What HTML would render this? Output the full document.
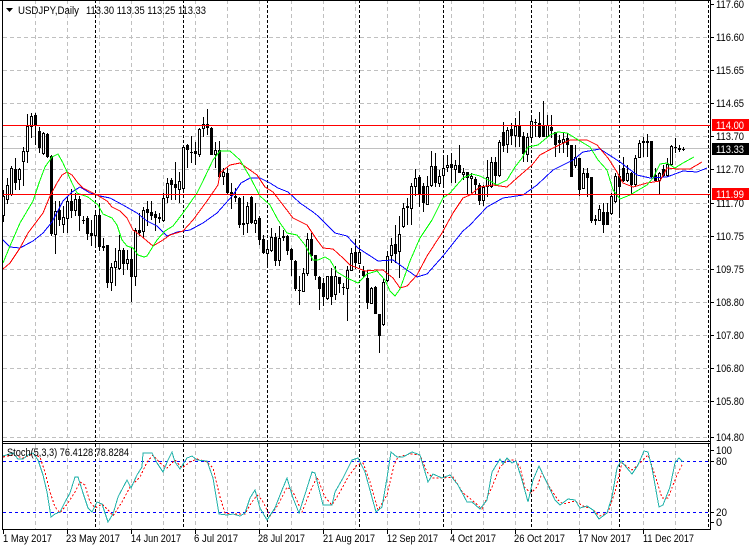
<!DOCTYPE html>
<html><head><meta charset="utf-8"><title>USDJPY Daily</title>
<style>
html,body{margin:0;padding:0;background:#fff;width:750px;height:550px;overflow:hidden}
svg{display:block}
text{font-family:"Liberation Sans",sans-serif;font-size:11px;fill:#000}
</style></head><body>
<svg width="750" height="550" viewBox="0 0 750 550" xmlns="http://www.w3.org/2000/svg">
<rect width="750" height="550" fill="#fff"/>
<!-- grid -->
<g shape-rendering="crispEdges" stroke="#c0c0c0" fill="none" stroke-dasharray="4 3">
<path d="M3 37.5H710M3 70.5H710M3 103.5H710M3 136.5H710M3 169.5H710M3 203.5H710M3 236.5H710M3 269.5H710M3 302.5H710M3 335.5H710M3 368.5H710M3 401.5H710M3 437.5H710"/>
<path d="M35.5 0V441M67.5 0V441M99.5 0V441M131.5 0V441M163.5 0V441M195.5 0V441M227.5 0V441M259.5 0V441M291.5 0V441M323.5 0V441M355.5 0V441M387.5 0V441M419.5 0V441M451.5 0V441M483.5 0V441M515.5 0V441M547.5 0V441M579.5 0V441M611.5 0V441M643.5 0V441M675.5 0V441"/>
<path d="M35.5 444V529M67.5 444V529M99.5 444V529M131.5 444V529M163.5 444V529M195.5 444V529M227.5 444V529M259.5 444V529M291.5 444V529M323.5 444V529M355.5 444V529M387.5 444V529M419.5 444V529M451.5 444V529M483.5 444V529M515.5 444V529M547.5 444V529M579.5 444V529M611.5 444V529M643.5 444V529M675.5 444V529"/>
</g>
<!-- period separators -->
<g shape-rendering="crispEdges" stroke="#000" fill="none" stroke-dasharray="3 2">
<path d="M95.5 0V441M183.5 0V441M267.5 0V441M359.5 0V441M443.5 0V441M531.5 0V441M619.5 0V441M708.5 0V441"/>
<path d="M95.5 444V529M183.5 444V529M267.5 444V529M359.5 444V529M443.5 444V529M531.5 444V529M619.5 444V529M708.5 444V529"/>
</g>
<!-- horizontal levels -->
<g shape-rendering="crispEdges" fill="none">
<path d="M3 148.5H710" stroke="#c0c0c0"/>
</g>
<!-- candle wicks -->
<path shape-rendering="crispEdges" stroke="#000" fill="none" d="M3.5 190V222M7.5 178V204M11.5 166V196M15.5 158V190M19.5 168V190M23.5 147V186M27.5 114V163M31.5 113V138M35.5 113V145M39.5 127V153M43.5 132V155M47.5 133V158M51.5 155V236M55.5 201V254M59.5 201V226M63.5 206V233M67.5 196V233M71.5 189V218M75.5 193V216M79.5 196V231M83.5 216V224M87.5 216V240M91.5 220V246M95.5 211V246M99.5 203V251M103.5 238V251M107.5 245V288M111.5 263V291M115.5 248V286M119.5 235V270M123.5 248V275M127.5 250V270M131.5 248V302M135.5 228V286M139.5 213V236M143.5 207V238M147.5 201V226M151.5 201V220M155.5 211V231M159.5 213V223M163.5 193V222M167.5 178V203M171.5 178V200M175.5 162V200M179.5 172V203M183.5 147V190M187.5 144V168M191.5 136V163M195.5 142V165M199.5 128V157M203.5 117V137M207.5 109V135M211.5 127V155M215.5 142V168M219.5 141V178M223.5 168V185M227.5 168V195M231.5 183V209M235.5 188V202M239.5 197V228M243.5 196V235M247.5 202V233M251.5 196V224M255.5 203V233M259.5 216V245M263.5 235V254M267.5 240V265M271.5 228V252M275.5 233V266M279.5 226V266M283.5 230V241M287.5 235V255M291.5 248V276M295.5 260V291M299.5 276V305M303.5 268V292M307.5 233V276M311.5 233V261M315.5 255V280M319.5 276V310M323.5 278V306M327.5 276V300M331.5 268V305M335.5 266V300M339.5 277V293M343.5 283V295M347.5 266V321M351.5 248V271M355.5 239V269M359.5 245V264M363.5 266V278M367.5 270V309M371.5 287V304M375.5 286V314M379.5 314V353M383.5 278V326M387.5 251V282M391.5 238V263M395.5 225V263M399.5 216V278M403.5 203V228M407.5 198V225M411.5 183V225M415.5 169V196M419.5 175V207M423.5 183V212M427.5 176V205M431.5 151V187M435.5 153V187M439.5 170V187M443.5 158V187M447.5 155V172M451.5 153V183M455.5 160V183M459.5 145V173M463.5 168V180M467.5 172V195M471.5 173V193M475.5 177V195M479.5 183V205M483.5 185V206M487.5 160V197M491.5 157V188M495.5 157V185M499.5 140V177M503.5 122V152M507.5 127V153M511.5 123V145M515.5 118V147M519.5 111V147M523.5 132V162M527.5 133V162M531.5 117V140M535.5 119V137M539.5 112V138M543.5 101V137M547.5 115V137M551.5 115V138M555.5 132V157M559.5 135V153M563.5 133V153M567.5 133V157M571.5 145V177M575.5 145V168M579.5 158V196M583.5 168V189M587.5 168V197M591.5 177V223M595.5 215V225M599.5 205V221M603.5 203V233M607.5 203V225M611.5 193V215M615.5 173V203M619.5 165V215M623.5 157V182M627.5 165V182M631.5 172V195M635.5 155V187M639.5 140V158M643.5 137V157M647.5 134V157M651.5 141V178M655.5 168V182M659.5 172V194M663.5 165V177M667.5 158V177M671.5 145V166M675.5 138V153M679.5 145V152M683.5 147V151"/>
<!-- candle bodies -->
<path shape-rendering="crispEdges" fill="#000" d="M2 196h3V216h-3zM6 185h3V200h-3zM10 168h3V195h-3zM14 169h3V183h-3zM18 169h3V180h-3zM22 151h3V162h-3zM26 126h3V152h-3zM30 116h3V127h-3zM34 115h3V126h-3zM38 131h3V148h-3zM42 133h3V154h-3zM46 134h3V157h-3zM50 156h3V234h-3zM54 211h3V235h-3zM58 210h3V220h-3zM62 217h3V225h-3zM66 201h3V219h-3zM70 201h3V211h-3zM74 199h3V211h-3zM78 199h3V216h-3zM82 220h3V221h-3zM86 218h3V234h-3zM90 233h3V236h-3zM94 215h3V236h-3zM98 215h3V247h-3zM102 246h3V248h-3zM106 245h3V283h-3zM110 267h3V283h-3zM114 261h3V268h-3zM118 250h3V269h-3zM122 250h3V264h-3zM126 259h3V264h-3zM130 259h3V277h-3zM134 230h3V277h-3zM138 230h3V233h-3zM142 210h3V232h-3zM146 209h3V213h-3zM150 212h3V216h-3zM154 214h3V218h-3zM158 217h3V219h-3zM162 198h3V221h-3zM166 183h3V198h-3zM170 180h3V185h-3zM174 184h3V188h-3zM178 181h3V190h-3zM182 147h3V189h-3zM186 145h3V150h-3zM190 152h3V153h-3zM194 151h3V154h-3zM198 129h3V155h-3zM202 124h3V129h-3zM206 124h3V128h-3zM210 128h3V155h-3zM214 150h3V155h-3zM218 150h3V177h-3zM222 172h3V177h-3zM226 173h3V193h-3zM230 192h3V196h-3zM234 196h3V198h-3zM238 198h3V225h-3zM242 223h3V225h-3zM246 206h3V224h-3zM250 197h3V223h-3zM254 220h3V224h-3zM258 218h3V240h-3zM262 239h3V253h-3zM266 249h3V254h-3zM270 237h3V251h-3zM274 237h3V261h-3zM278 238h3V261h-3zM282 236h3V238h-3zM286 236h3V251h-3zM290 249h3V260h-3zM294 261h3V289h-3zM298 290h3V291h-3zM302 273h3V292h-3zM306 239h3V274h-3zM310 239h3V256h-3zM314 255h3V276h-3zM318 277h3V289h-3zM322 283h3V297h-3zM326 276h3V299h-3zM330 276h3V297h-3zM334 276h3V295h-3zM338 277h3V284h-3zM342 287h3V288h-3zM346 270h3V289h-3zM350 253h3V271h-3zM354 252h3V263h-3zM358 252h3V264h-3zM362 271h3V276h-3zM366 278h3V303h-3zM370 288h3V304h-3zM374 287h3V314h-3zM378 314h3V336h-3zM382 282h3V325h-3zM386 256h3V281h-3zM390 245h3V256h-3zM394 244h3V254h-3zM398 234h3V252h-3zM402 208h3V227h-3zM406 206h3V208h-3zM410 186h3V209h-3zM414 178h3V187h-3zM418 177h3V195h-3zM422 186h3V203h-3zM426 186h3V205h-3zM430 166h3V186h-3zM434 166h3V183h-3zM438 176h3V184h-3zM442 168h3V176h-3zM446 165h3V168h-3zM450 164h3V168h-3zM454 165h3V170h-3zM458 165h3V173h-3zM462 172h3V175h-3zM466 172h3V178h-3zM470 176h3V179h-3zM474 179h3V185h-3zM478 185h3V201h-3zM482 187h3V201h-3zM486 177h3V187h-3zM490 162h3V187h-3zM494 162h3V176h-3zM498 142h3V176h-3zM502 132h3V146h-3zM506 130h3V145h-3zM510 129h3V136h-3zM514 126h3V136h-3zM518 125h3V137h-3zM522 136h3V154h-3zM526 137h3V155h-3zM530 121h3V138h-3zM534 122h3V123h-3zM538 123h3V137h-3zM542 125h3V137h-3zM546 125h3V137h-3zM550 127h3V131h-3zM554 132h3V145h-3zM558 140h3V143h-3zM562 139h3V143h-3zM566 138h3V145h-3zM570 145h3V177h-3zM574 157h3V166h-3zM578 158h3V190h-3zM582 173h3V189h-3zM586 173h3V178h-3zM590 177h3V221h-3zM594 219h3V221h-3zM598 209h3V221h-3zM602 212h3V225h-3zM606 212h3V225h-3zM610 196h3V214h-3zM614 176h3V202h-3zM618 176h3V187h-3zM622 168h3V181h-3zM626 173h3V181h-3zM630 173h3V185h-3zM634 158h3V185h-3zM638 143h3V158h-3zM642 141h3V143h-3zM646 141h3V143h-3zM650 141h3V177h-3zM654 175h3V181h-3zM658 173h3V181h-3zM662 169h3V176h-3zM666 164h3V176h-3zM670 146h3V165h-3zM674 147h3V148h-3zM678 148h3V150h-3zM682 149h3V150h-3z"/>
<!-- white body interiors -->
<path shape-rendering="crispEdges" stroke="#fff" fill="none" d="M3.5 197V215M7.5 186V199M11.5 169V194M19.5 170V179M23.5 152V161M27.5 127V151M31.5 117V126M43.5 134V153M55.5 212V234M63.5 218V224M67.5 202V218M75.5 200V210M95.5 216V235M111.5 268V282M115.5 262V267M119.5 251V268M127.5 260V263M135.5 231V276M143.5 211V231M163.5 199V220M167.5 184V197M179.5 182V189M183.5 148V188M199.5 130V154M203.5 125V128M215.5 151V154M223.5 173V176M247.5 207V223M255.5 221V223M267.5 250V253M271.5 238V250M279.5 239V260M303.5 274V291M307.5 240V273M327.5 277V298M335.5 277V294M347.5 271V288M351.5 254V270M359.5 253V263M371.5 289V303M383.5 283V324M387.5 257V280M391.5 246V255M399.5 235V251M403.5 209V226M411.5 187V208M415.5 179V186M427.5 187V204M431.5 167V185M439.5 177V183M443.5 169V175M447.5 166V167M455.5 166V169M463.5 173V174M471.5 177V178M483.5 188V200M487.5 178V186M491.5 163V186M499.5 143V175M507.5 131V144M515.5 127V135M527.5 138V154M531.5 122V137M547.5 126V136M563.5 140V142M575.5 158V165M583.5 174V188M599.5 210V220M611.5 197V213M615.5 177V201M627.5 174V180M635.5 159V184M639.5 144V157M643.5 142V142M659.5 174V180M667.5 165V175M671.5 147V164"/>
<!-- moving averages -->
<g fill="none" shape-rendering="crispEdges">
<polyline stroke="#0000ff" points="3,240 10,247 20,248 33,241 43,233 52,222 63,201 72,192 80,187 90,193 100,196 110,198 123,205 137,213 147,221 157,226 167,236 177,232 190,230 203,223 217,213 233,195 241,183 250,178 260,178 270,183 278,188 288,192 300,203 313,212 318,216 335,233 347,236 358,248 378,261 393,260 407,270 417,277 427,274 443,256 463,231 470,225 487,207 503,198 523,195 537,185 553,170 573,160 583,152 600,149 620,162 637,175 650,178 667,177 683,171 697,172 707,168"/>
<polyline stroke="#ff0000" points="3,269 10,263 20,248 28,233 43,213 50,196 57,183 62,175 67,172 72,175 78,183 83,188 97,195 107,201 112,207 120,211 127,218 133,230 140,235 147,241 153,246 163,240 170,235 183,231 193,220 207,201 218,185 220,173 230,165 240,163 250,170 257,175 265,187 273,192 283,205 293,218 307,225 317,240 323,248 333,249 343,258 350,265 365,271 377,270 383,270 393,278 400,288 407,286 417,275 427,256 442,233 453,213 463,198 470,195 480,187 493,185 507,187 517,178 532,165 540,155 553,148 570,140 587,140 597,145 608,158 617,172 623,183 633,187 647,183 660,181 667,168 677,169 690,169 702,162"/>
<polyline stroke="#00ff00" points="3,263 10,246 20,223 33,201 39,183 45,167 52,157 58,154 63,163 72,183 77,193 88,197 98,205 103,214 112,218 117,225 122,240 127,246 133,248 138,255 144,257 147,256 157,240 165,231 173,226 183,213 197,193 202,183 213,160 220,151 230,151 240,160 250,177 260,196 270,205 278,220 287,233 297,235 305,245 313,260 318,260 325,257 330,260 337,272 347,278 358,283 367,274 377,271 385,280 390,291 395,296 400,289 410,261 420,238 432,220 443,198 450,193 463,178 472,174 480,176 490,181 497,185 507,180 515,167 522,158 528,147 538,145 550,135 558,132 567,133 580,141 590,147 598,160 607,170 613,190 620,199 630,195 647,185 653,178 660,164 667,163 675,168 683,163 694,157"/>
</g>
<!-- red horizontal -->
<path shape-rendering="crispEdges" fill="none" stroke="#ff0000" d="M3 125.5H710M3 194.5H710"/>
<!-- stoch levels -->
<path shape-rendering="crispEdges" fill="none" stroke="#0000ff" stroke-dasharray="3 3" d="M3 461.5H710M3 512.5H710"/>
<!-- stoch signal -->
<polyline fill="none" stroke="#ff0000" stroke-dasharray="2 2" shape-rendering="crispEdges" points="3,457 13,455 23,458 33,454 40,457 45,472 50,492 55,507 60,513 68,503 75,492 80,482 85,485 90,502 95,508 102,504 108,510 113,516 122,502 130,487 140,477 147,462 153,455 160,463 167,468 175,460 182,468 190,462 197,459 207,462 213,468 220,497 225,513 233,514 245,514 250,505 257,495 262,500 270,516 278,505 287,487 293,492 302,512 310,492 317,477 325,497 332,505 340,492 348,477 357,465 363,463 370,482 378,510 387,495 394,465 398,457 410,454 420,455 427,472 433,478 443,478 453,477 463,493 472,500 482,509 492,487 500,467 508,460 515,460 520,467 525,488 531,493 537,487 542,473 550,488 558,500 563,504 575,501 583,506 592,509 600,516 608,512 615,492 622,463 632,470 640,463 648,455 655,475 662,498 668,498 677,475 683,463"/>
<!-- stoch main -->
<polyline fill="none" stroke="#20b2aa" shape-rendering="crispEdges" points="3,456 13,453 18,459 23,459 28,455 33,453 38,460 43,475 47,492 51,517 55,514 60,512 65,502 70,493 75,477 78,477 83,493 88,508 92,512 97,502 102,504 108,522 113,514 118,497 127,480 131,488 137,475 142,467 143,453 147,453 152,453 157,463 163,472 168,460 172,452 175,462 180,469 187,458 192,456 197,460 207,461 213,478 219,514 227,515 233,514 240,516 245,513 250,498 255,490 260,508 267,520 275,508 280,495 287,478 293,498 299,513 307,488 312,472 315,473 323,505 332,505 335,492 343,478 352,460 358,458 365,472 376,512 382,507 387,478 391,452 397,457 403,457 412,452 420,455 428,482 433,474 442,478 450,475 458,485 467,502 472,502 480,509 487,500 492,472 500,459 503,464 507,458 512,463 516,461 522,480 528,502 533,480 539,466 548,485 555,500 560,505 568,499 575,500 580,508 587,506 593,510 599,519 607,513 612,497 617,468 621,461 632,474 638,465 644,451 648,452 652,468 659,507 663,505 670,487 675,463 679,458 683,462"/>
<!-- frames -->
<g shape-rendering="crispEdges" fill="none" stroke="#000">
<path d="M2.5 0V530M0 0.5H710M2 441.5H710M2 443.5H710M2 529.5H710M710.5 0V530"/>
<path d="M3.5 530V534M67.5 530V534M131.5 530V534M195.5 530V534M259.5 530V534M323.5 530V534M387.5 530V534M451.5 530V534M515.5 530V534M579.5 530V534M643.5 530V534"/>
<path d="M711 37.5H714M711 70.5H714M711 103.5H714M711 136.5H714M711 169.5H714M711 203.5H714M711 236.5H714M711 269.5H714M711 302.5H714M711 335.5H714M711 368.5H714M711 401.5H714M711 437.5H714M711 4.5H714M711 450.5H714M711 461.5H714M711 512.5H714M711 522.5H714"/>
</g>
<!-- header -->
<path d="M6 8h7l-3.5 4z" fill="#000"/>
<text x="18" y="14" textLength="61" lengthAdjust="spacingAndGlyphs">USDJPY,Daily</text>
<text x="86" y="14" textLength="120" lengthAdjust="spacingAndGlyphs">113.30 113.35 113.25 113.33</text>
<text x="7" y="456" textLength="122" lengthAdjust="spacingAndGlyphs">Stoch(5,3,3) 76.4128 78.8284</text>
<!-- price labels -->
<g>
<text x="716" y="8" textLength="28" lengthAdjust="spacingAndGlyphs">117.60</text>
<text x="716" y="41" textLength="28" lengthAdjust="spacingAndGlyphs">116.60</text>
<text x="716" y="74" textLength="28" lengthAdjust="spacingAndGlyphs">115.65</text>
<text x="716" y="107" textLength="28" lengthAdjust="spacingAndGlyphs">114.65</text>
<text x="716" y="140" textLength="28" lengthAdjust="spacingAndGlyphs">113.70</text>
<text x="716" y="173" textLength="28" lengthAdjust="spacingAndGlyphs">112.70</text>
<text x="716" y="207" textLength="28" lengthAdjust="spacingAndGlyphs">111.70</text>
<text x="716" y="240" textLength="28" lengthAdjust="spacingAndGlyphs">110.75</text>
<text x="716" y="273" textLength="28" lengthAdjust="spacingAndGlyphs">109.75</text>
<text x="716" y="306" textLength="28" lengthAdjust="spacingAndGlyphs">108.80</text>
<text x="716" y="339" textLength="28" lengthAdjust="spacingAndGlyphs">107.80</text>
<text x="716" y="372" textLength="28" lengthAdjust="spacingAndGlyphs">106.80</text>
<text x="716" y="405" textLength="28" lengthAdjust="spacingAndGlyphs">105.80</text>
<text x="716" y="441" textLength="28" lengthAdjust="spacingAndGlyphs">104.80</text>
<rect x="712" y="119" width="37" height="12" fill="#ff0000" shape-rendering="crispEdges"/>
<text x="716" y="129" textLength="28" lengthAdjust="spacingAndGlyphs" style="fill:#fff">114.00</text>
<rect x="712" y="188" width="37" height="12" fill="#ff0000" shape-rendering="crispEdges"/>
<text x="716" y="198" textLength="28" lengthAdjust="spacingAndGlyphs" style="fill:#fff">111.99</text>
<rect x="712" y="143" width="37" height="12" fill="#000" shape-rendering="crispEdges"/>
<text x="716" y="153" textLength="28" lengthAdjust="spacingAndGlyphs" style="fill:#fff">113.33</text>
<text x="716" y="454" textLength="16" lengthAdjust="spacingAndGlyphs">100</text>
<text x="716" y="465" textLength="11" lengthAdjust="spacingAndGlyphs">80</text>
<text x="716" y="516" textLength="11" lengthAdjust="spacingAndGlyphs">20</text>
<text x="716" y="526">0</text>
</g>
<!-- time labels -->
<g>
<text x="3" y="542" textLength="49" lengthAdjust="spacingAndGlyphs">1 May 2017</text>
<text x="66" y="542" textLength="54" lengthAdjust="spacingAndGlyphs">23 May 2017</text>
<text x="131" y="542" textLength="50" lengthAdjust="spacingAndGlyphs">14 Jun 2017</text>
<text x="194" y="542" textLength="44" lengthAdjust="spacingAndGlyphs">6 Jul 2017</text>
<text x="258" y="542" textLength="47" lengthAdjust="spacingAndGlyphs">28 Jul 2017</text>
<text x="323" y="542" textLength="52" lengthAdjust="spacingAndGlyphs">21 Aug 2017</text>
<text x="387" y="542" textLength="51" lengthAdjust="spacingAndGlyphs">12 Sep 2017</text>
<text x="450" y="542" textLength="46" lengthAdjust="spacingAndGlyphs">4 Oct 2017</text>
<text x="514" y="542" textLength="51" lengthAdjust="spacingAndGlyphs">26 Oct 2017</text>
<text x="578" y="542" textLength="53" lengthAdjust="spacingAndGlyphs">17 Nov 2017</text>
<text x="643" y="542" textLength="51" lengthAdjust="spacingAndGlyphs">11 Dec 2017</text>
</g>
</svg>
</body></html>
